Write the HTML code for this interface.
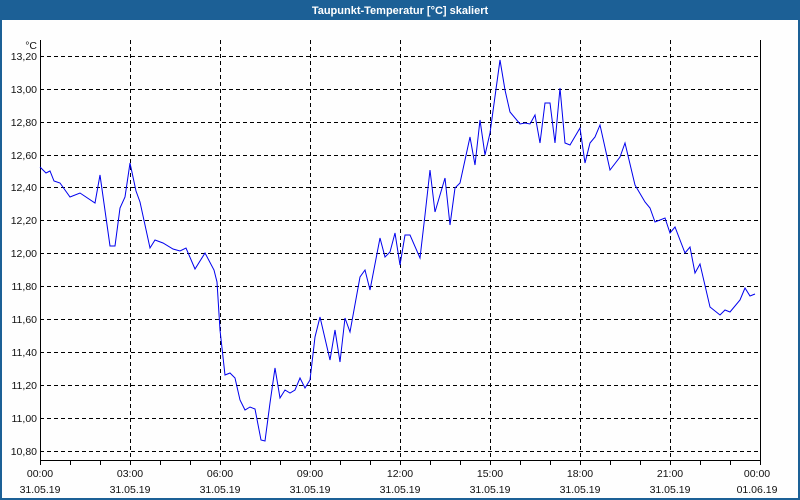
<!DOCTYPE html>
<html><head><meta charset="utf-8"><style>
html,body{margin:0;padding:0;width:800px;height:500px;overflow:hidden;background:#fff}
</style></head><body>
<svg width="800" height="500" xmlns="http://www.w3.org/2000/svg" font-family="Liberation Sans, DejaVu Sans, sans-serif" font-size="10.5">
<rect x="0" y="0" width="800" height="500" fill="#1c6096"/>
<rect x="2" y="20" width="796" height="478" fill="#fefefe"/>
<text x="400" y="14" text-anchor="middle" fill="#fff" font-weight="bold" font-size="11">Taupunkt-Temperatur [°C] skaliert</text>
<g stroke="#000" stroke-dasharray="4,3" stroke-width="1">
<path d="M40 56.5H760M40 89.5H760M40 122.5H760M40 155.5H760M40 187.5H760M40 220.5H760M40 253.5H760M40 286.5H760M40 319.5H760M40 352.5H760M40 385.5H760M40 418.5H760M40 451.5H760"/>
<path d="M130.5 40V460M220.5 40V460M310.5 40V460M400.5 40V460M490.5 40V460M580.5 40V460M670.5 40V460"/>
</g>
<path d="M40.5 40V460.5H760.5V40" fill="none" stroke="#000"/>
<path d="M40.5 460V465M70.5 460V465M100.5 460V465M130.5 460V465M160.5 460V465M190.5 460V465M220.5 460V465M250.5 460V465M280.5 460V465M310.5 460V465M340.5 460V465M370.5 460V465M400.5 460V465M430.5 460V465M460.5 460V465M490.5 460V465M520.5 460V465M550.5 460V465M580.5 460V465M610.5 460V465M640.5 460V465M670.5 460V465M700.5 460V465M730.5 460V465M760.5 460V465" stroke="#000"/>
<g text-anchor="end" fill="#111">
<text x="37" y="49">°C</text>
<text x="37" y="60">13,20</text><text x="37" y="93">13,00</text><text x="37" y="126">12,80</text><text x="37" y="159">12,60</text><text x="37" y="191">12,40</text><text x="37" y="224">12,20</text><text x="37" y="257">12,00</text><text x="37" y="290">11,80</text><text x="37" y="323">11,60</text><text x="37" y="356">11,40</text><text x="37" y="389">11,20</text><text x="37" y="422">11,00</text><text x="37" y="455">10,80</text>
</g>
<g text-anchor="middle" fill="#111">
<text x="40" y="477">00:00</text><text x="40" y="493">31.05.19</text>
<text x="130" y="477">03:00</text><text x="130" y="493">31.05.19</text>
<text x="220" y="477">06:00</text><text x="220" y="493">31.05.19</text>
<text x="310" y="477">09:00</text><text x="310" y="493">31.05.19</text>
<text x="400" y="477">12:00</text><text x="400" y="493">31.05.19</text>
<text x="490" y="477">15:00</text><text x="490" y="493">31.05.19</text>
<text x="580" y="477">18:00</text><text x="580" y="493">31.05.19</text>
<text x="670" y="477">21:00</text><text x="670" y="493">31.05.19</text>
<text x="757" y="477">00:00</text><text x="757" y="493">01.06.19</text>
</g>
<polyline fill="none" stroke="#0000ee" stroke-width="1" points="40,167 46,173 50,171 54,181 60,183 70,197 80,193 95,203 100,175 110,246 115,246 120,208 125,197 130,163 136,191 140,202 150,248 155,240 163,243 173,249 180,251 186,248 195,269 205,253 214,270 217,282 220,330 225,375 230,373 235,378 240,400 245,410 250,407 255,409 261,440 265,441 270,403 275,368 277,380 280,398 285,390 290,393 295,390 300,378 305,388 310,380 315,337 320,317 330,360 335,330 340,362 345,318 350,332 360,277 365,270 370,290 380,238 385,257 390,252 395,233 400,265 405,235 410,235 420,258 425,215 430,170 435,212 445,178 450,225 455,188 460,183 470,137 475,165 480,120 485,155 490,133 500,60 505,90 510,112 520,124 525,123 530,124 535,115 540,143 545,103 550,103 555,143 560,88 565,143 570,145 580,128 585,163 590,143 595,137 600,125 610,170 620,157 625,143 635,185 645,202 650,208 655,222 665,218 670,233 675,227 685,253 690,247 695,273 700,264 710,307 720,315 725,310 730,312 740,300 745,288 750,296 755,294"/>
</svg>
</body></html>
